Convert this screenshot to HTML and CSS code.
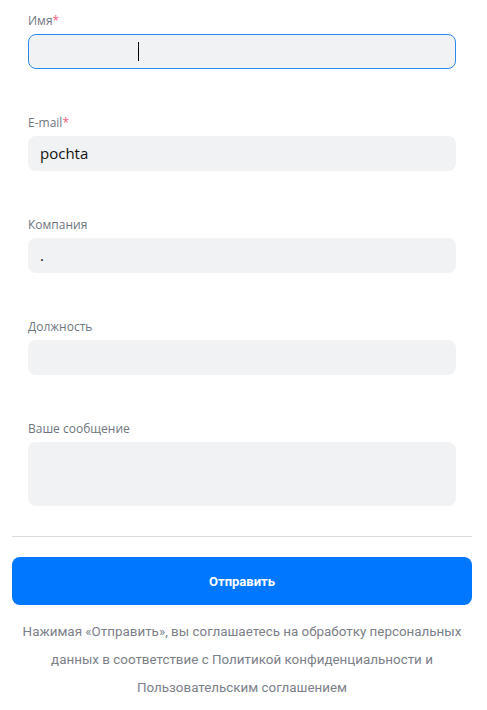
FILE: index.html
```html
<!DOCTYPE html>
<html lang="ru">
<head>
<meta charset="utf-8">
<link rel="stylesheet" href="styles.css">
</head>
<body>
<form class="form">
  <div class="fields">
    <div class="field">
      <div class="label">Имя<span class="req">*</span></div>
      <div class="input focused"><span class="caret"></span></div>
    </div>
    <div class="field">
      <div class="label">E-mail<span class="req">*</span></div>
      <div class="input">pochta</div>
    </div>
    <div class="field">
      <div class="label">Компания</div>
      <div class="input">.</div>
    </div>
    <div class="field">
      <div class="label">Должность</div>
      <div class="input"></div>
    </div>
    <div class="field">
      <div class="label">Ваше сообщение</div>
      <div class="input textarea"></div>
    </div>
  </div>
  <hr class="divider">
  <button type="button" class="submit">Отправить</button>
  <p class="note">Нажимая «Отправить», вы соглашаетесь на обработку персональных данных в соответствие с Политикой конфиденциальности и Пользовательским соглашением</p>
</form>
</body>
</html>
```
FILE: styles.css
```css
html, body {
  margin: 0;
  padding: 0;
  background: #fff;
}
.form {
  padding: 11px 15px 0 12px;
  font-family: "Open Sans", "Noto Sans", sans-serif;
}
.fields {
  padding: 0 16px;
  display: flex;
  flex-direction: column;
  gap: 44px;
}
.field {
  display: flex;
  flex-direction: column;
  gap: 3px;
}
.label {
  font-size: 12px;
  line-height: 20px;
  color: #6e7580;
}
.req {
  color: #ff5c7c;
}
.input {
  box-sizing: border-box;
  height: 35px;
  background: #f1f2f4;
  border-radius: 8px;
  border: 1px solid transparent;
  padding: 0 11px;
  font-size: 15px;
  line-height: 33px;
  color: #111;
}
.input.focused {
  border-color: #2a8af0;
  display: flex;
  align-items: center;
}
.caret {
  display: block;
  width: 1px;
  height: 19px;
  background: #000;
  margin-left: 98px;
}
.textarea {
  height: 64px;
}
.divider {
  border: 0;
  border-top: 1px solid #dcdcdc;
  margin: 30px 0 20px;
}
.submit {
  display: block;
  width: 100%;
  height: 48px;
  border: 0;
  border-radius: 8px;
  background: #0077ff;
  color: #fff;
  font-family: "Roboto", "Noto Sans", sans-serif;
  font-weight: 700;
  font-size: 13px;
  cursor: pointer;
}
.note {
  margin: 13px 0 0;
  text-align: center;
  font-family: "Roboto", "Noto Sans", sans-serif;
  font-size: 13.4px;
  line-height: 28px;
  color: #7b8089;
}
```
